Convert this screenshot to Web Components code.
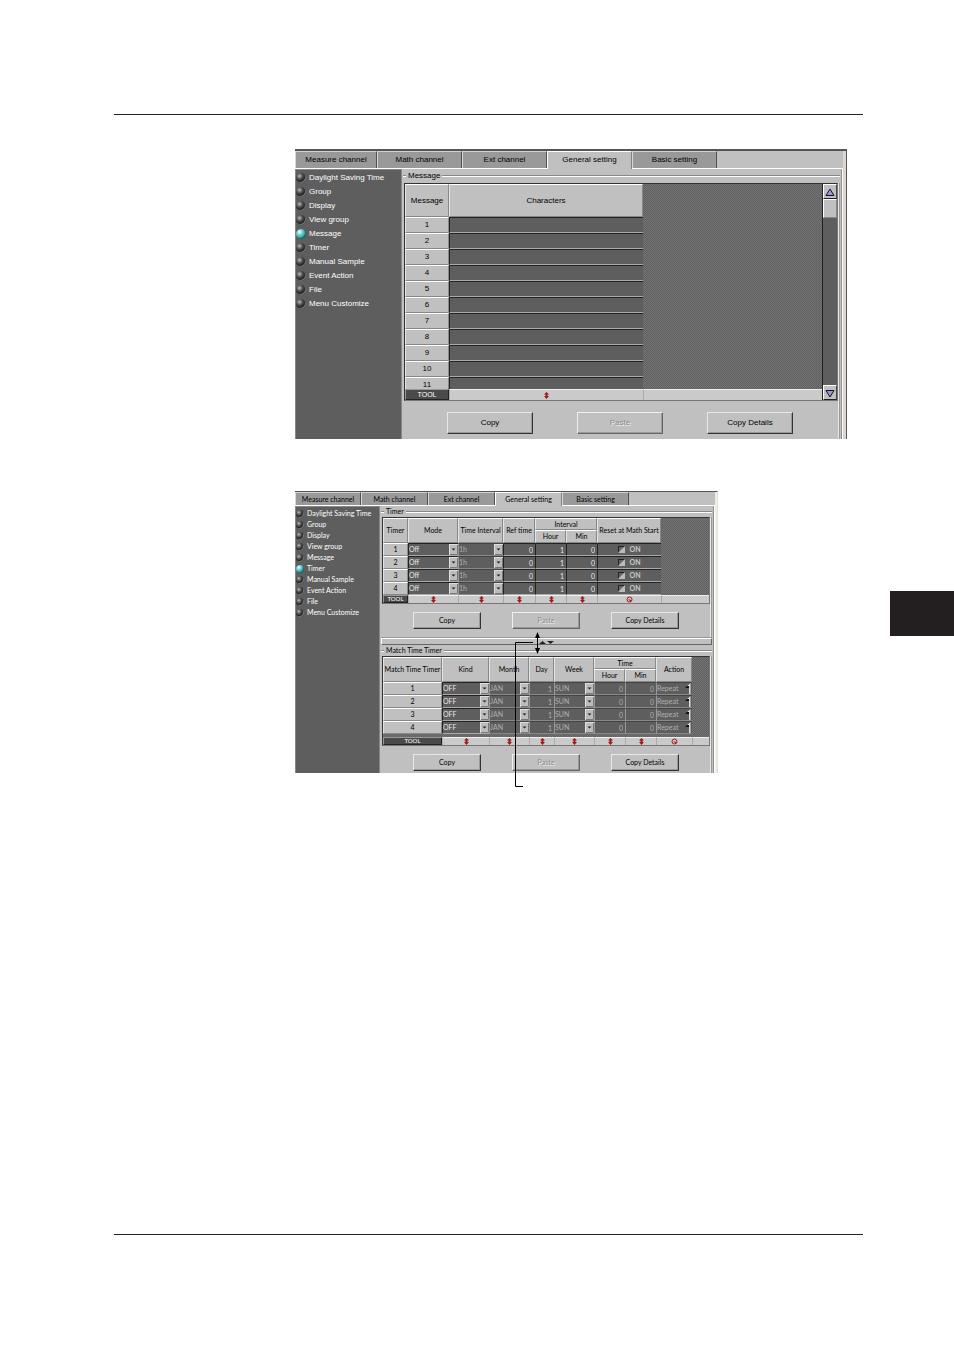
<!DOCTYPE html>
<html lang="en">
<head>
    <meta charset="UTF-8">
    <meta name="viewport" content="width=device-width, initial-scale=1.0">
    <title>General setting</title>
    <style>
        body{
            margin: 0;
            background-color: #fff;
            font-family: "Liberation Sans", Arial, sans-serif;
        }
    </style>
</head>
<body>
    <template id="manual-page-tp">
        <style>
            :host{
                display: flex;
                flex-direction: column;
                box-sizing: border-box;
                min-height: 100vh;
                padding: 114px 91px 115px 114px;
                position: relative;
            }
            hr{
                width: 100%;
                height: 1px;
                margin: 0;
                border: 0;
                background-color: #222;
            }
            main{
                flex: 1;
                display: flex;
                flex-direction: column;
                gap: 52px;
                padding: 34px 0 0 181px;
            }
            /* thumb index on the page edge */
            .thumb{
                position: absolute;
                right: 0;
                top: 591px;
                width: 64px;
                height: 45px;
                background-color: #231f20;
            }
        </style>
        <hr>
        <main><slot></slot></main>
        <hr>
        <div class="thumb"></div>
    </template>

    <template id="setting-window-tp">
        <style>
            :host{
                --fs: 8px;
                --tab: 85px;
                --tab-first: 82px;
                --tab-h: 17px;
                --nav: 107px;
                --item: 14px;
                --led: 10px;
                --led-gap: 3px;
                --cap: 14px;
                --btn-w: 86px;
                --btn-h: 22px;
                --btn-gap: 44px;
                --btn-top: 11px;
                --btn-left: 43px;
                --head: 33px;
                --row: 16px;
                --tool: 11px;
                --top: 2px;
                display: block;
                box-sizing: border-box;
                width: 100%;
                max-width: 552px;
                font-size: var(--fs);
                line-height: 1;
                color: #000;
                background-color: #c0c0c0;
                border-top: var(--top) solid #555;
                border-right: 1px solid #555;
            }
            :host([compact]){
                --fs: 7px;
                --tab: 67px;
                --tab-first: 66px;
                --tab-h: 13px;
                --nav: 85px;
                --item: 11px;
                --led: 8px;
                --led-gap: 3px;
                --cap: 11px;
                --btn-w: 68px;
                --btn-h: 17px;
                --btn-gap: 31px;
                --btn-top: 8px;
                --btn-left: 31px;
                --head: 25px;
                --row: 13px;
                --tool: 8px;
                --top: 1px;
                max-width: 423px;
                font-family: Lato, "Liberation Sans", sans-serif;
                border-right: 1px solid #e4e0da;
            }
            .frame{
                border-right: 3px solid #ddd6d0;
            }
            :host([compact]) .frame{
                border-right: 2px solid #f0ece6;
            }
            .tabs{
                display: flex;
                border-bottom: 1px solid #fff;
            }
            button{
                font: inherit;
                color: inherit;
                box-sizing: border-box;
                width: var(--tab);
                height: var(--tab-h);
                padding: 0;
                border: 0;
                border-top: 1px solid #d0d0d0;
                border-right: 1px solid #505050;
                border-left: 1px solid #d8d8d8;
                background-color: #999;
            }
            button:first-child{
                width: var(--tab-first);
            }
            button[aria-selected="true"]{
                background-color: #c0c0c0;
                border-color: #fff;
                border-right-color: #808080;
                margin-bottom: -1px;
                padding-bottom: 1px;
                height: calc(var(--tab-h) + 1px);
            }
            .body{
                display: flex;
                border-right: 1px solid #fff;
                box-shadow: inset -1px 0 #909090;
            }
            nav{
                flex: none;
                box-sizing: border-box;
                width: var(--nav);
                padding-top: 1px;
                border-top: 1px solid #888;
                border-right: 1px solid #888;
                border-left: 1px solid #888;
                background-color: #5e5e5e;
                color: #fff;
            }
            label{
                display: flex;
                align-items: center;
                gap: var(--led-gap);
                height: var(--item);
                white-space: nowrap;
            }
            input{
                appearance: none;
                margin: 0;
                width: var(--led);
                height: var(--led);
                border-radius: 50%;
                background: radial-gradient(circle at 35% 30%, #bbb 0, #555 30%, #1a1a1a 60%, #000 100%);
                box-shadow: inset -1px -1px #777;
            }
            input:checked{
                background: radial-gradient(circle at 35% 30%, #fff 0, #6fd0d0 30%, #2a9a9e 65%, #155 100%);
                box-shadow: inset -1px -1px #266;
            }
            .panel{
                flex: 1;
                min-width: 0;
                padding: 0 2px 0 1px;
            }
        </style>
        <div class="frame">
            <div class="tabs" role="tablist"></div>
            <div class="body">
                <nav></nav>
                <div class="panel"><slot></slot></div>
            </div>
        </div>
    </template>

    <template id="group-box-tp">
        <style>
            :host{
                display: block;
            }
            .cap{
                display: flex;
                align-items: center;
                gap: 2px;
                height: var(--cap);
            }
            .cap::before, .cap::after{
                content: "";
                height: 1px;
                background-color: #888;
                border-bottom: 1px solid #fff;
            }
            .cap::before{
                width: 3px;
            }
            .cap::after{
                flex: 1;
            }
            .in{
                padding: 0 1px;
                border-right: 1px solid #999;
                box-shadow: inset -1px 0 #e8e8e8;
            }
            .buttons{
                display: flex;
                gap: var(--btn-gap);
                padding: var(--btn-top) 0 5px var(--btn-left);
            }
            :host([tight]) .buttons{
                padding-bottom: 2px;
            }
            :host([loose]) .buttons{
                padding-bottom: 9px;
            }
            button{
                font: inherit;
                color: #000;
                box-sizing: border-box;
                width: var(--btn-w);
                height: var(--btn-h);
                padding: 0;
                border: 1px solid;
                border-color: #e8e8e8 #333 #333 #e8e8e8;
                background-color: #c0c0c0;
                box-shadow: inset -1px -1px #999;
            }
            button:disabled{
                color: #8c8c8c;
                text-shadow: 1px 1px #eee;
                border-color: #f0f0f0 #666 #666 #f0f0f0;
            }
        </style>
        <div class="cap"><span></span></div>
        <div class="in">
            <slot></slot>
            <div class="buttons">
                <button>Copy</button>
                <button disabled>Paste</button>
                <button>Copy Details</button>
            </div>
        </div>
    </template>

    <template id="setting-grid-tp">
        <style>
            :host{
                display: flex;
                box-sizing: border-box;
                border: 1px solid #777;
                border-left-color: #333;
                border-top-color: #333;
                background: repeating-conic-gradient(#606060 0 25%, #747474 0 50%) 0 0 / 2px 2px;
            }
            .view{
                flex: 1;
                min-width: 0;
                overflow: hidden;
            }
            :host([scroll]) .view{
                height: 216px;
            }
            table{
                width: 100%;
                table-layout: fixed;
                border-collapse: separate;
                border-spacing: 0;
            }
            th, td{
                box-sizing: border-box;
                padding: 0;
                font-weight: normal;
                overflow: hidden;
                white-space: nowrap;
            }
            th{
                background-color: #c0c0c0;
                text-align: center;
                border: 1px solid;
                border-color: #fff #888 #888 #e4e4e4;
            }
            thead tr{
                height: var(--head);
            }
            thead.two tr:first-child{
                height: 12px;
            }
            thead.two tr:last-child{
                height: 13px;
            }
            tbody tr{
                height: var(--row);
            }
            tbody td{
                background-color: #5e5e5e;
                border-top: 1px solid #222;
                border-left: 1px solid #222;
                border-bottom: 1px solid #aaa;
                color: #e8e8e8;
            }
            tbody td.dim{
                color: #b0b0b0;
            }
            tbody td.light{
                border-top-color: #444;
                border-bottom-color: #888;
                border-left-color: #999;
            }
            .fill, tbody td.fill, tbody .space td{
                background: none;
                border: 0;
            }
            tbody .space{
                height: 3px;
            }
            tfoot tr{
                height: var(--tool);
            }
            tfoot{
                position: sticky;
                bottom: 0;
            }
            tfoot td{
                background-color: #cacaca;
                text-align: center;
                border-left: 1px solid #aaa;
                border-top: 1px solid #eee;
                line-height: 0;
            }
            tfoot th{
                background-color: #4a4a4a;
                color: #fff;
                border-color: #999 #222 #222 #999;
                font-size: calc(var(--fs) - 1px);
                line-height: 6px;
            }
            tfoot svg{
                width: 7px;
                height: 7px;
            }
            input[type="text"]{
                display: block;
                box-sizing: border-box;
                width: 100%;
                height: 11px;
                padding: 0 2px;
                border: 0;
                background: none;
                font: inherit;
                color: inherit;
                text-align: right;
            }
            label{
                display: flex;
                align-items: center;
                justify-content: center;
                gap: 4px;
                font-weight: bold;
                color: #c8c8c8;
            }
            input[type="checkbox"]{
                appearance: none;
                margin: 0;
                width: 7px;
                height: 7px;
                background: linear-gradient(135deg, #666 40%, #bbb 60%);
                border: 1px solid;
                box-sizing: border-box;
                border-color: #222 #bbb #bbb #222;
            }
            .spin{
                display: flex;
                align-items: center;
                justify-content: space-between;
            }
            .spin svg{
                flex: none;
                width: 7px;
                height: 11px;
            }
            .bar{
                display: flex;
                flex-direction: column;
                width: 15px;
                box-sizing: border-box;
                border-left: 1px solid #222;
                background-color: #5e5e5e;
            }
            .bar button, .thumb{
                box-sizing: border-box;
                width: 14px;
                height: 15px;
                padding: 0;
                border: 1px solid;
                border-color: #fff #444 #222 #fff;
                background-color: #c0c0c0;
                line-height: 0;
            }
            .bar .thumb{
                height: 19px;
                border-color: #fff #888 #888 #fff;
            }
            .bar .track{
                flex: 1;
            }
        </style>
        <div class="view"><table></table></div>
    </template>

    <template id="combo-box-tp">
        <style>
            :host{
                display: block;
                position: relative;
            }
            select{
                appearance: none;
                display: block;
                box-sizing: border-box;
                width: 100%;
                height: 11px;
                padding: 0 9px 0 0;
                border: 0;
                border-radius: 0;
                background: none;
                font: inherit;
                color: inherit;
                opacity: 1;
            }
            svg{
                position: absolute;
                right: 0;
                top: 0;
                width: 9px;
                height: 11px;
                pointer-events: none;
            }
        </style>
        <select></select>
        <svg viewBox="0 0 9 11">
            <rect width="9" height="11" fill="#ddd"/>
            <path d="M1 10.500H8.500V1" fill="none" stroke="#777"/>
            <rect x="1" y="1" width="7" height="9" fill="#bcbcbc"/>
            <path d="M2.500 4.500H6.500L4.500 6.500Z" fill="#222"/>
        </svg>
    </template>

    <template id="split-bar-tp">
        <style>
            :host{
                display: block;
                position: relative;
                z-index: 1;
                box-sizing: border-box;
                height: 7px;
                border: 1px solid;
                border-color: #fff #666 #666 #fff;
                box-shadow: 0 -1px #999;
            }
            svg{
                position: absolute;
                left: 132px;
                top: -7px;
                width: 44px;
                height: 157px;
                pointer-events: none;
            }
        </style>
        <svg viewBox="0 0 44 157">
            <path d="M19 10.500H1.500V154.500H9" fill="none" stroke="#000"/>
            <path d="M23.500 3V20" fill="none" stroke="#000"/>
            <path d="M23.500 0L26 6H21ZM23.500 22L26 16H21Z" fill="#000"/>
            <path d="M25 12H32L28.500 9Z" fill="#222"/>
            <path d="M33 9H40L36.500 12Z" fill="#222"/>
        </svg>
    </template>

    <manual-page>
        <setting-window current="Message">
            <group-box caption="Message">
                <setting-grid name="message" scroll></setting-grid>
            </group-box>
        </setting-window>
        <setting-window current="Timer" compact>
            <group-box caption="Timer" loose>
                <setting-grid name="timer"></setting-grid>
            </group-box>
            <split-bar></split-bar>
            <group-box caption="Match Time Timer" tight>
                <setting-grid name="match"></setting-grid>
            </group-box>
        </setting-window>
    </manual-page>

    <script>
        const TABS = ["Measure channel", "Math channel", "Ext channel", "General setting", "Basic setting"];
        const ITEMS = ["Daylight Saving Time", "Group", "Display", "View group", "Message", "Timer",
            "Manual Sample", "Event Action", "File", "Menu Customize"];

        // first column is the row header, the rest are the editable cells
        const GRIDS = {
            message: {
                head: "Message", width: 44, rows: 11,
                cols: [{ label: "Characters", width: 194, type: "text", value: "" }]
            },
            timer: {
                head: "Timer", width: 25, rows: 4,
                cols: [
                    { label: "Mode", width: 50, type: "combo", value: "Off" },
                    { label: "Time Interval", width: 45, type: "combo", value: "1h", dim: true },
                    { label: "Ref time", width: 32, type: "text", value: "0" },
                    { label: "Hour", group: "Interval", width: 31, type: "text", value: "1" },
                    { label: "Min", group: "Interval", width: 31, type: "text", value: "0" },
                    { label: "Reset at Math Start", width: 64, type: "check", value: "ON" }
                ]
            },
            match: {
                head: "Match Time Timer", width: 59, rows: 4, space: true,
                cols: [
                    { label: "Kind", width: 47, type: "combo", value: "OFF" },
                    { label: "Month", width: 40, type: "combo", value: "JAN", dim: true },
                    { label: "Day", width: 25, type: "text", value: "1", dim: true },
                    { label: "Week", width: 40, type: "combo", value: "SUN", dim: true },
                    { label: "Hour", group: "Time", width: 31, type: "text", value: "0", dim: true },
                    { label: "Min", group: "Time", width: 31, type: "text", value: "0", dim: true },
                    { label: "Action", width: 36, type: "spin", value: "Repeat", dim: true }
                ]
            }
        };

        const ARROWS = `<svg viewBox="0 0 7 7"><path d="M3.500 0L6 2.500H4.500V4H6L3.500 7L1 4H2.500V2.500H1Z" fill="#a01818"/></svg>`;
        const RING = `<svg viewBox="0 0 7 7"><circle cx="3.500" cy="3.500" r="2.500" fill="none" stroke="#a01818"/><path d="M2 3L5 4V6Z" fill="#a01818"/></svg>`;

        class BaseElement extends HTMLElement{
            constructor(){
                super();
                this.attachShadow({ mode: "open" });
                const tp = document.getElementById(this.localName + "-tp");
                this.shadowRoot.append(tp.content.cloneNode(true));
            }
            $(selector){
                return this.shadowRoot.querySelector(selector);
            }
        }

        class ManualPage extends BaseElement{}
        class SplitBar extends BaseElement{}

        class SettingWindow extends BaseElement{
            connectedCallback(){
                const current = this.getAttribute("current");
                this.$(".tabs").innerHTML = TABS.map(t =>
                    `<button role="tab" aria-selected="${t === "General setting"}">${t}</button>`).join("");
                this.$("nav").innerHTML = ITEMS.map(i =>
                    `<label><input type="radio" name="item" ${i === current ? "checked" : ""}>${i}</label>`).join("");
            }
        }

        class GroupBox extends BaseElement{
            connectedCallback(){
                this.$(".cap span").textContent = this.getAttribute("caption");
            }
        }

        class ComboBox extends BaseElement{
            connectedCallback(){
                const select = this.$("select");
                select.setAttribute("aria-label", this.getAttribute("label"));
                select.innerHTML = `<option>${this.getAttribute("value")}</option>`;
            }
        }

        class SettingGrid extends BaseElement{
            connectedCallback(){
                const grid = GRIDS[this.getAttribute("name")];
                this.$("table").innerHTML = this.colgroup(grid) + this.head(grid) + this.rows(grid) + this.tool(grid);
                if(this.hasAttribute("scroll")){
                    this.shadowRoot.append(this.bar());
                }
            }

            colgroup(grid){
                const widths = [grid.width, ...grid.cols.map(c => c.width)];
                return `<colgroup>${widths.map(w => `<col style="width:${w}px">`).join("")}<col></colgroup>`;
            }

            head(grid){
                const two = grid.cols.some(c => c.group);
                const span = two ? 2 : 1;
                let top = `<th rowspan="${span}">${grid.head}</th>`;
                let sub = "";
                let last = "";
                for(const col of grid.cols){
                    if(!col.group){
                        top += `<th rowspan="${span}">${col.label}</th>`;
                        continue;
                    }
                    if(col.group !== last){
                        top += `<th colspan="2">${col.group}</th>`;
                        last = col.group;
                    }
                    sub += `<th>${col.label}</th>`;
                }
                top += `<td class="fill" rowspan="${span}"></td>`;
                return `<thead class="${two ? "two" : ""}"><tr>${top}</tr>${two ? `<tr>${sub}</tr>` : ""}</thead>`;
            }

            rows(grid){
                let html = "";
                for(let i = 1; i <= grid.rows; i++){
                    const cells = grid.cols.map(c =>
                        `<td class="${c.dim ? "dim light" : ""}">${this.cell(c, i)}</td>`).join("");
                    html += `<tr><th>${i}</th>${cells}<td class="fill"></td></tr>`;
                }
                if(grid.space){
                    html += `<tr class="space"><td colspan="${grid.cols.length + 2}"></td></tr>`;
                }
                return `<tbody>${html}</tbody>`;
            }

            cell(col, i){
                const label = `${col.label} ${i}`;
                switch(col.type){
                    case "combo":
                        return `<combo-box label="${label}" value="${col.value}"></combo-box>`;
                    case "check":
                        return `<label><input type="checkbox">${col.value}</label>`;
                    case "spin":
                        return `<div class="spin">${col.value}<svg viewBox="0 0 7 11">
                            <path d="M0 5L4 1V5Z" fill="#111"/><path d="M2 3L5.500 0V11H4V3Z" fill="#ddd"/></svg></div>`;
                    default:
                        return `<input type="text" aria-label="${label}" value="${col.value}">`;
                }
            }

            tool(grid){
                const cells = grid.cols.map(c =>
                    `<td>${c.type === "check" || c.type === "spin" ? RING : ARROWS}</td>`).join("");
                return `<tfoot><tr><th>TOOL</th>${cells}<td></td></tr></tfoot>`;
            }

            bar(){
                const bar = document.createElement("div");
                bar.className = "bar";
                bar.innerHTML = `
                    <button aria-label="Scroll up"><svg width="10" height="10" viewBox="0 0 10 10">
                        <path d="M1 8.500L5 2L9 8.500Z" fill="#99c" stroke="#113"/></svg></button>
                    <div class="thumb"></div>
                    <div class="track"></div>
                    <button aria-label="Scroll down"><svg width="10" height="10" viewBox="0 0 10 10">
                        <path d="M1 2.500L5 9L9 2.500Z" fill="#99c" stroke="#113"/></svg></button>`;
                return bar;
            }
        }

        customElements.define("manual-page", ManualPage);
        customElements.define("split-bar", SplitBar);
        customElements.define("setting-window", SettingWindow);
        customElements.define("group-box", GroupBox);
        customElements.define("combo-box", ComboBox);
        customElements.define("setting-grid", SettingGrid);
    </script>
</body>
</html>
